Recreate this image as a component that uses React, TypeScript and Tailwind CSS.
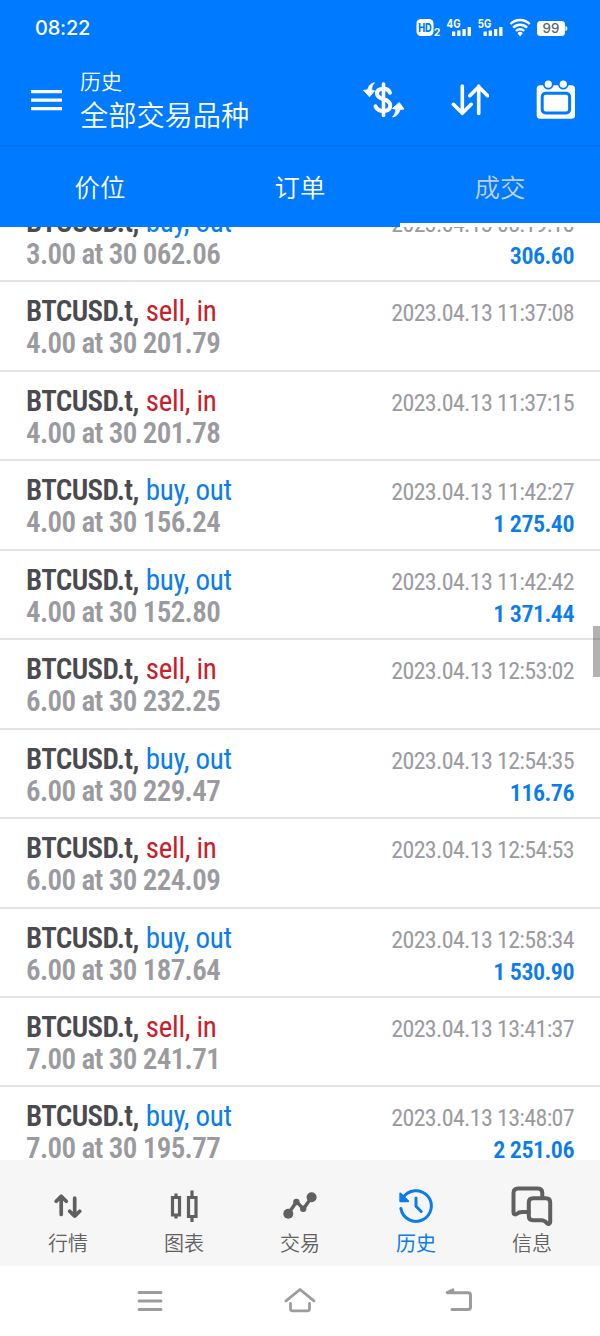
import clsx from 'clsx'
import type { ReactNode } from 'react'

type Deal = {
  side: 'buy' | 'sell'
  entry: 'in' | 'out'
  volume: string
  price: string
  time: string
  profit?: string
}

const deals: Deal[] = [
  { side: 'buy', entry: 'out', volume: '3.00', price: '30 062.06', time: '2023.04.13 08:19:18', profit: '306.60' },
  { side: 'sell', entry: 'in', volume: '4.00', price: '30 201.79', time: '2023.04.13 11:37:08' },
  { side: 'sell', entry: 'in', volume: '4.00', price: '30 201.78', time: '2023.04.13 11:37:15' },
  { side: 'buy', entry: 'out', volume: '4.00', price: '30 156.24', time: '2023.04.13 11:42:27', profit: '1 275.40' },
  { side: 'buy', entry: 'out', volume: '4.00', price: '30 152.80', time: '2023.04.13 11:42:42', profit: '1 371.44' },
  { side: 'sell', entry: 'in', volume: '6.00', price: '30 232.25', time: '2023.04.13 12:53:02' },
  { side: 'buy', entry: 'out', volume: '6.00', price: '30 229.47', time: '2023.04.13 12:54:35', profit: '116.76' },
  { side: 'sell', entry: 'in', volume: '6.00', price: '30 224.09', time: '2023.04.13 12:54:53' },
  { side: 'buy', entry: 'out', volume: '6.00', price: '30 187.64', time: '2023.04.13 12:58:34', profit: '1 530.90' },
  { side: 'sell', entry: 'in', volume: '7.00', price: '30 241.71', time: '2023.04.13 13:41:37' },
  { side: 'buy', entry: 'out', volume: '7.00', price: '30 195.77', time: '2023.04.13 13:48:07', profit: '2 251.06' },
]

const StatusIcons = () => (
  <svg width="152" height="20" viewBox="416 17 152 20" fill="white" className="font-['Inter',sans-serif] font-bold">
    <rect x="416.5" y="18" width="17" height="17" rx="4.5" />
    <text x="418.2" y="30.7" fontSize="11.5" fontWeight="800" textLength="13.6" lengthAdjust="spacingAndGlyphs" fill="#007aff">
      HD
    </text>
    <text x="433.8" y="35" fontSize="10.5">2</text>
    <text x="446.5" y="26.8" fontSize="11.8" textLength="14" lengthAdjust="spacingAndGlyphs">4G</text>
    <path d="M452 30.5h3.3V35H452zM457.2 29.5h3.3V35h-3.3zM462.4 28h3.3v7h-3.3zM467.6 26h3.3v9h-3.3z" />
    <text x="477.8" y="26.8" fontSize="11.8" textLength="13.5" lengthAdjust="spacingAndGlyphs">5G</text>
    <path d="M483.5 30.5h3.3V35h-3.3zM488.7 29.5h3.3V35h-3.3zM494 28h3.3v7H494zM499.2 26h3.3v9h-3.3z" />
    <g fill="none" stroke="white" strokeWidth="2.4">
      <path d="M510.5 23a13.6 13.6 0 0 1 19.2 0" />
      <path d="M513.2 26.6a9.7 9.7 0 0 1 13.8 0" />
      <path d="M516 30a5.8 5.8 0 0 1 8.2 0" />
    </g>
    <path d="M520.1 35.4l-2.6-3.2a3.6 3.6 0 0 1 5.2 0z" />
    <rect x="537" y="20" width="28" height="15" rx="3.5" />
    <path d="M565.5 25c1.2.3 1.8 1.2 1.8 2.5s-.6 2.2-1.8 2.5z" />
    <text x="542.6" y="32.4" fontSize="13.5" fontWeight="500" textLength="16.8" lengthAdjust="spacingAndGlyphs" fill="#5b6470">
      99
    </text>
  </svg>
)

const MenuIcon = () => (
  <svg width="31" height="21" viewBox="0 0 31 21" fill="white">
    <path d="M0 0h31v3.2H0zM0 8.6h31v3.2H0zM0 17.1h31v3.2H0z" />
  </svg>
)

const CurrencyIcon = () => (
  <svg width="42" height="36" viewBox="0 0 42 36" fill="none" stroke="white">
    <path d="M20.5 2v31.5" strokeWidth="3.6" strokeLinecap="round" />
    <path
      d="M27 10.8C26 8 24 6.7 20.5 6.7c-4.2 0-6.5 1.8-6.5 4.8 0 3.8 3.3 4.8 6.5 5.7s6.7 2.3 6.7 6.3c0 3.6-2.5 5.5-6.7 5.5-3.8 0-6.6-1.5-8-4.6"
      strokeWidth="4"
      strokeLinecap="round"
    />
    <path d="M11.5.8c-3 .3-6 3-6.8 7L.5 8.3l6 6.500 5-6-2.800-.6c-.2-2.800.8-5.500 2.800-7.400z" fill="white" strokeWidth=".8" strokeLinejoin="round" />
    <path d="M29.5 35c3-.2 6.5-3 7.3-7.3l4.200-.6-4.700-6.600-7 6 3.500.8c0 3-1.300 5.600-3.300 7.700z" fill="white" strokeWidth=".8" strokeLinejoin="round" />
  </svg>
)

const SortIcon = () => (
  <svg width="38" height="32" viewBox="0 0 38 32" fill="none" stroke="white" strokeWidth="3.6" strokeLinecap="round" strokeLinejoin="round">
    <path d="M11.3 2v27M2.4 20.3l8.9 9 8.9-9M27.7 29.5V2M18.8 11.7l8.9-9 8.9 9" />
  </svg>
)

const CalendarIcon = () => (
  <svg width="40" height="40" viewBox="0 0 40 40">
    <rect x=".7" y="5.2" width="38.3" height="33.6" rx="3.5" fill="white" />
    <rect x="6.2" y="13.2" width="27.4" height="19.8" rx="3.5" fill="none" stroke="#007aff" strokeWidth="3" />
    <g fill="white" stroke="#007aff" strokeWidth="1.8">
      <circle cx="12.3" cy="4.2" r="4.5" />
      <circle cx="27.3" cy="4.2" r="4.5" />
    </g>
  </svg>
)

const QuotesIcon = () => (
  <svg width="28" height="24" viewBox="0 0 28 24" fill="none" stroke="currentColor" strokeWidth="3.7" strokeLinecap="round" strokeLinejoin="round">
    <path d="M7.2 20.5v-18M2.2 7.2l5-5 5 5M20.7 4v18M15.7 17.2l5 5 5-5" />
  </svg>
)

const ChartIcon = () => (
  <svg width="28" height="34" viewBox="0 0 28 34" fill="none" stroke="currentColor" strokeWidth="3.2">
    <path d="M6 4.5V8M6 26v3.5M22 1.5v6M22 27v6" />
    <path d="M2.5 8.5h7V26h-7zM18.5 8.5H26v19h-7.5z" />
  </svg>
)

const TradeIcon = () => (
  <svg width="34" height="28" viewBox="0 0 34 28" fill="currentColor">
    <path d="M5 22l8.6-12.3 6.7 7.2 8.2-11.4" fill="none" stroke="currentColor" strokeWidth="3.4" strokeLinejoin="round" />
    <circle cx="5.3" cy="21.8" r="5" />
    <circle cx="13.4" cy="10" r="3.2" />
    <circle cx="20.2" cy="16.7" r="3.2" />
    <circle cx="28.6" cy="5.3" r="5" />
  </svg>
)

const HistoryIcon = () => (
  <svg width="36" height="36" viewBox="0 0 36 36" fill="none" stroke="currentColor" strokeWidth="3" strokeLinecap="round">
    <path d="M2.9 20.5A15.3 15.3 0 1 0 5 10" />
    <path d="M18 10v8.3l5.2 5.2" strokeLinejoin="round" />
    <path d="M2.3 5.5v7.8h7.8z" fill="currentColor" strokeWidth="2" strokeLinejoin="round" />
  </svg>
)

const MessagesIcon = () => (
  <svg width="42" height="40" viewBox="0 0 42 40" fill="none" stroke="currentColor" strokeWidth="4" strokeLinejoin="round" strokeLinecap="round">
    <path d="M17.8 26H11c-2.5 0-4 .8-5.500 2-1.500.9-3 .2-3-1.500V7c0-3 1.500-4.500 4.500-4.500h20c3 0 4.300 1.500 4.300 4.500v4.500" />
    <path d="M22 12.3h13c2.7 0 4.2 1.5 4.2 4.2V36c0 2-1.8 2.6-3.2 1.3-2-2.300-3-3-5.500-3H22c-2.700 0-4.200-1.500-4.200-4.200V16.500c0-2.700 1.500-4.200 4.200-4.200z" />
  </svg>
)

const tabs = ['价位', '订单', '成交']

const Header = () => (
  <header className="flex h-[227px] flex-none flex-col bg-[#007aff] text-white">
    <div className="flex h-14 items-center justify-between pl-[35px] pr-8">
      <span className="font-['Inter',sans-serif] text-[20px] font-medium tracking-[-0.2px]">08:22</span>
      <StatusIcons />
    </div>
    <div className="flex h-[91px] items-center border-b-2 border-[#0071ee] pl-[31px] pr-6">
      <MenuIcon />
      <div className="ml-[18px] flex-1 pb-[3px]">
        <div className="text-[21px] leading-[29px]">历史</div>
        <div className="text-[28.2px] leading-[37px]">全部交易品种</div>
      </div>
      <div className="flex items-center pb-px">
        <CurrencyIcon />
        <div className="ml-[46px] mr-[47px]">
          <SortIcon />
        </div>
        <CalendarIcon />
      </div>
    </div>
    <div className="grid flex-1 grid-cols-3 text-[25.4px]">
      {tabs.map((tab) => (
        <div
          key={tab}
          className={clsx(
            'flex items-center justify-center border-b-4 pt-[3px]',
            tab === '成交' ? 'border-white text-[#bfd0e6]' : 'border-transparent',
          )}
        >
          {tab}
        </div>
      ))}
    </div>
  </header>
)

const DealRow = ({ deal }: { deal: Deal }) => (
  <div className="h-[89.46px] flex-none border-b-2 border-[#e4e4e5] px-[26px] pt-[13px] text-[29px] leading-8">
    <div className="flex items-baseline justify-between">
      <div>
        <span className="font-semibold tracking-[-0.6px] text-[#4a4a4f]">BTCUSD.t, </span>
        <span className={clsx('ml-px tracking-[-0.3px]', deal.side === 'buy' ? 'text-[#0a7cee]' : 'text-[#c8202a]')}>
          {deal.side}, {deal.entry}
        </span>
      </div>
      <div className="text-[24px] leading-none tracking-[-0.66px] text-[#9b9b9f]">{deal.time}</div>
    </div>
    <div className="flex items-baseline justify-between font-semibold">
      <div className="tracking-[-0.64px] text-[#9b9b9f]">
        {deal.volume} at {deal.price}
      </div>
      <div className="text-[24px] leading-none tracking-[-0.5px] text-[#0a7cee]">{deal.profit}</div>
    </div>
  </div>
)

const NavItem = ({ icon, label, active }: { icon: ReactNode; label: string; active?: boolean }) => (
  <div className={clsx('flex flex-col items-center', active ? 'font-normal text-[#0a7cee]' : 'text-[#606060]')}>
    <div className="mt-[26px] flex h-10 items-center">{icon}</div>
    <div className="mt-0.5 text-[20px] leading-[30px]">{label}</div>
  </div>
)

const BottomNav = () => (
  <nav className="grid h-[106px] flex-none grid-cols-5 bg-[#f6f6f6] px-2.5">
    <NavItem icon={<QuotesIcon />} label="行情" />
    <NavItem icon={<ChartIcon />} label="图表" />
    <NavItem icon={<TradeIcon />} label="交易" />
    <NavItem icon={<HistoryIcon />} label="历史" active />
    <NavItem icon={<MessagesIcon />} label="信息" />
  </nav>
)

const SystemBar = () => (
  <div className="flex h-[70px] flex-none items-center bg-white pl-[137px] text-[#9c9c9c]">
    <svg width="26" height="22" viewBox="0 0 26 22" stroke="currentColor" strokeWidth="3" strokeLinecap="round">
      <path d="M2 2.5h22M2 11h22M2 19.5h22" />
    </svg>
    <svg
      className="mb-0.5 ml-[121px] mr-[129px]"
      width="32"
      height="26"
      viewBox="0 0 32 26"
      fill="none"
      stroke="currentColor"
      strokeWidth="2.8"
      strokeLinecap="round"
      strokeLinejoin="round"
    >
      <path d="M2 13.8L16 2.5l14 11.3M6.5 16.5v5.3q0 2 2 2h15q2 0 2-2v-5.3" />
    </svg>
    <svg
      className="mb-0.5"
      width="28"
      height="26"
      viewBox="0 0 28 26"
      fill="none"
      stroke="currentColor"
      strokeWidth="3"
      strokeLinecap="round"
      strokeLinejoin="round"
    >
      <path d="M8 2.8L2.2 5.7H23q2.5 0 2.5 2.5V20q0 2.500-2.500 2.500H7" />
    </svg>
  </div>
)

const App = () => (
  <div className="flex h-[1336px] w-[600px] flex-col overflow-hidden bg-white font-['Noto_Sans_CJK_SC',sans-serif] font-[350]">
    <Header />
    <main className="relative min-h-0 flex-1 overflow-hidden font-['Roboto_Condensed',Roboto,sans-serif] font-normal">
      <div className="-mt-[34.1px] flex flex-col">
        {deals.map((deal) => (
          <DealRow key={deal.time} deal={deal} />
        ))}
      </div>
      {/* scroll thumb */}
      <div className="absolute right-0 top-[399px] h-[51px] w-[7px] bg-black/30" />
    </main>
    <BottomNav />
    <SystemBar />
  </div>
)

export default App
